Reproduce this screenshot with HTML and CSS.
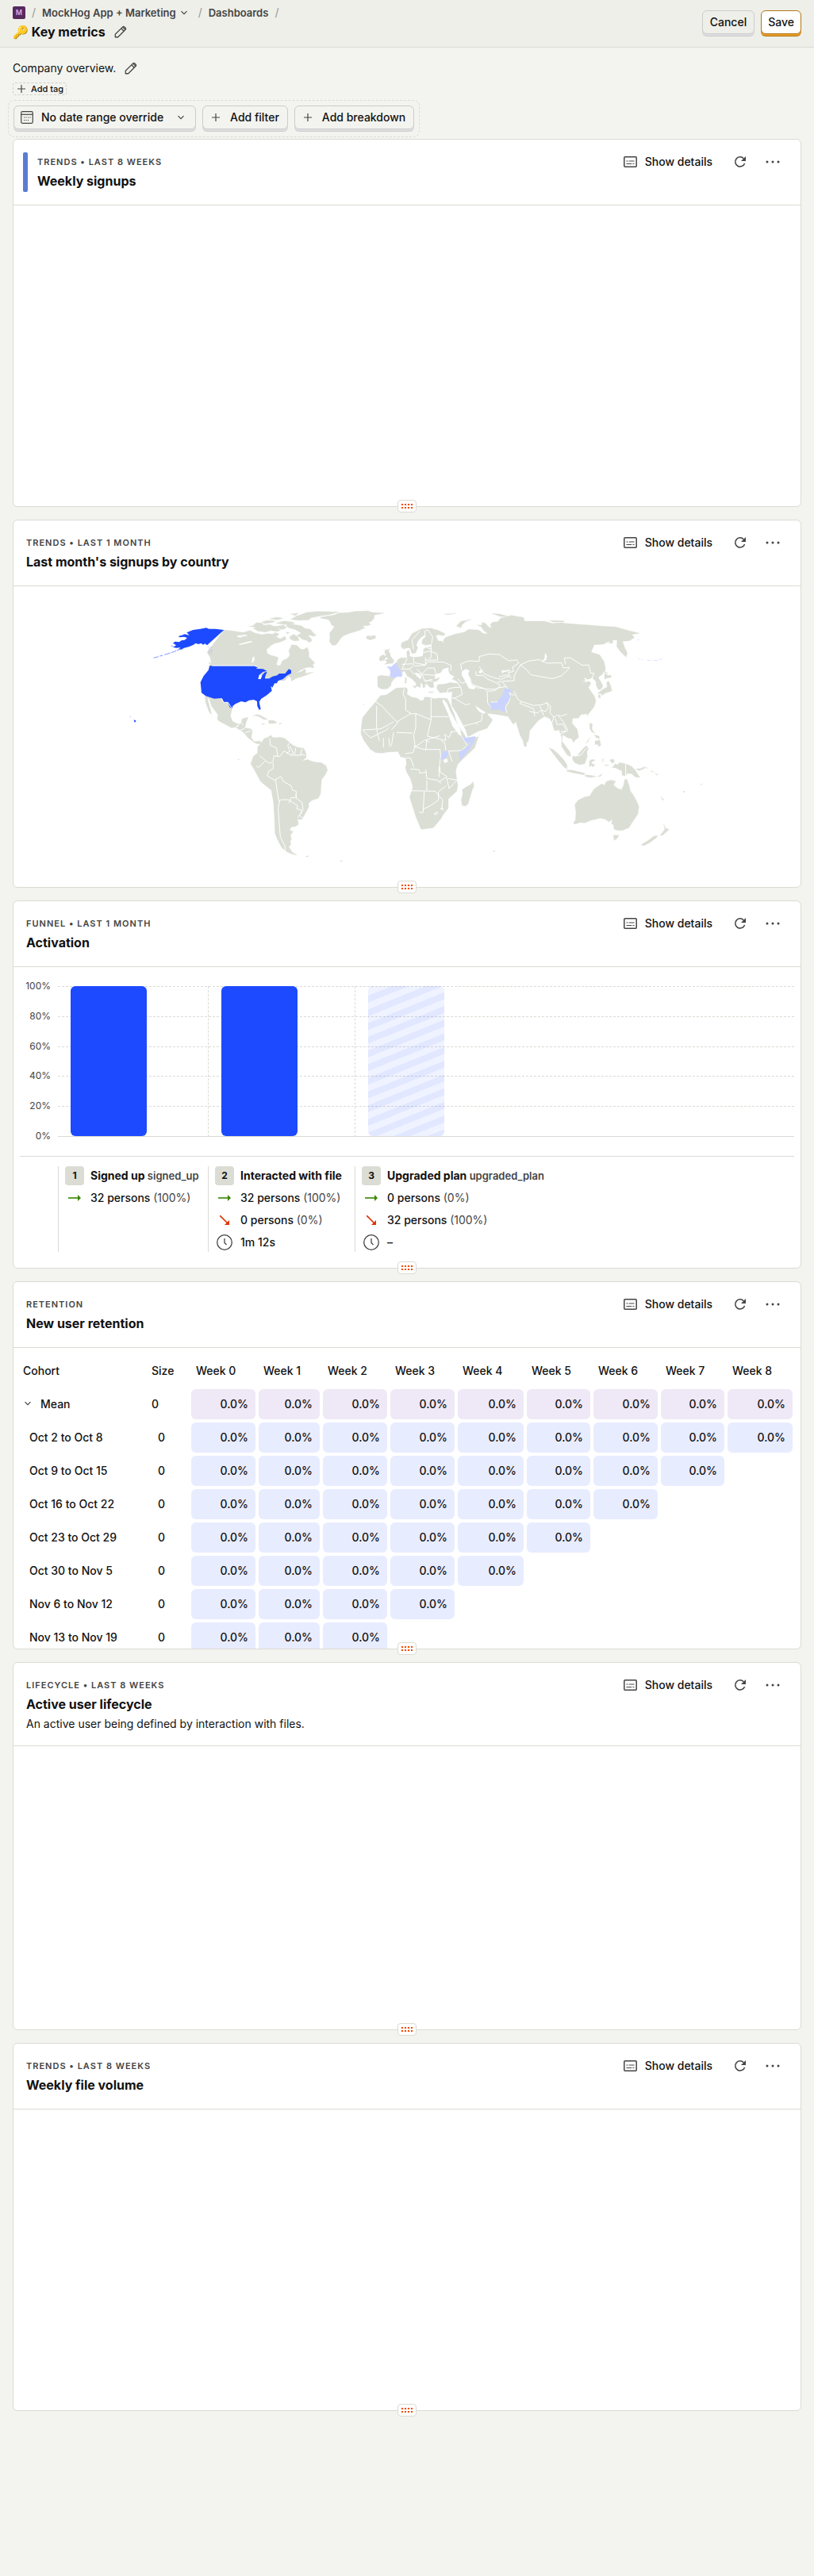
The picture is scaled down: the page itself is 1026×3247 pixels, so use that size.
FILE: index.html
```html
<!DOCTYPE html>
<html lang="en">
<head>
<meta charset="utf-8">
<meta name="viewport" content="width=device-width, initial-scale=1">
<title>Key metrics</title>
<link rel="stylesheet" href="styles.css">
</head>
<body>
<svg class="sprite" aria-hidden="true">
  <symbol id="pencil" viewBox="0 0 24 24"><path d="M3 21v-4.600L15.600 3.800a2 2 0 0 1 2.800 0l1.800 1.800a2 2 0 0 1 0 2.800L7.600 21zM13 6.400l4.600 4.600M15.500 4l4.600 4.600" fill="none" stroke="currentColor" stroke-width="1.700" stroke-linejoin="round"/></symbol>
  <symbol id="chevron" viewBox="0 0 12 12"><path d="M2.500 4.200 6 7.700l3.500-3.500" fill="none" stroke="currentColor" stroke-width="1.200"/></symbol>
  <symbol id="plus" viewBox="0 0 12 12"><path d="M6 1v10M1 6h10" fill="none" stroke="currentColor" stroke-width="1.200"/></symbol>
  <symbol id="calendar" viewBox="0 0 16 16"><rect x=".7" y=".7" width="14.600" height="14.600" rx="1.500" fill="none" stroke="currentColor" stroke-width="1.200"/><path d="M1 4.300h14" stroke="currentColor" stroke-width="1.200"/><path d="M6.500 8h1.200M9 8h1.200M11.500 8h1.200M4 11.500h1.200M6.500 11.500h1.200M9 11.500h1.200M4 8h1.200" stroke="currentColor" stroke-width="1.200"/></symbol>
  <symbol id="details" viewBox="0 0 17 14"><rect x=".8" y=".8" width="15.400" height="12.400" rx="1" fill="none" stroke="currentColor" stroke-width="1.500"/><path d="M3.500 6h2M6.700 6h6.800M3.500 9.500h6.800M11.500 9.500h2" stroke="currentColor" stroke-width="1.200"/></symbol>
  <symbol id="refresh" viewBox="0 0 16 16"><path d="M13.600 10A6.100 6.100 0 1 1 12.300 3.700" fill="none" stroke="currentColor" stroke-width="1.600"/><path d="M15 1v6H9z" fill="currentColor"/></symbol>
  <symbol id="dots" viewBox="0 0 18 4"><g fill="currentColor"><circle cx="2" cy="2" r="1.500"/><circle cx="9" cy="2" r="1.500"/><circle cx="16" cy="2" r="1.500"/></g></symbol>
  <symbol id="grip" viewBox="0 0 16 6"><path d="M0 1h16M0 5h16" stroke="#fbe6dc"/><path d="M1 1h2m2 0h2m2 0h2m2 0h2M1 5h2m2 0h2m2 0h2m2 0h2" stroke="#f54e00" stroke-width="2"/></symbol>
  <symbol id="arrow" viewBox="0 0 16 8"><path d="M0 4h13" stroke="currentColor" stroke-width="1.600"/><path d="M12 0l4 4-4 4z" fill="currentColor"/></symbol>
  <symbol id="drop" viewBox="0 0 12 12"><path d="M0 0l10 10" stroke="currentColor" stroke-width="1.700"/><path d="M12 6v6H6z" fill="currentColor"/></symbol>
  <symbol id="clock" viewBox="0 0 20 20"><circle cx="10" cy="10" r="9.300" fill="none" stroke="currentColor" stroke-width="1.300"/><path d="M10 5v5.500l2.500 2.500" fill="none" stroke="currentColor" stroke-width="1.300"/></symbol>
</svg>

<header class="topbar">
  <div class="topbar-main">
    <nav class="crumbs" aria-label="Breadcrumb">
      <a class="org" href="#">M</a><span class="slash">/</span>
      <a class="project" href="#">MockHog App + Marketing <svg class="ic12"><use href="#chevron"/></svg></a><span class="slash">/</span>
      <a href="#">Dashboards</a><span class="slash">/</span>
    </nav>
    <div class="title-row"><h1>🔑 Key metrics</h1><button class="icon-btn" aria-label="Edit name"><svg class="ic18"><use href="#pencil"/></svg></button></div>
  </div>
  <button class="btn">Cancel</button>
  <button class="btn btn-primary">Save</button>
</header>

<main class="page">
  <div class="desc-row"><span>Company overview.</span><button class="icon-btn" aria-label="Edit description"><svg class="ic18"><use href="#pencil"/></svg></button></div>
  <button class="tag-btn"><svg class="ic12"><use href="#plus"/></svg>Add tag</button>
  <div class="filters">
    <button class="btn btn-date"><svg class="ic16"><use href="#calendar"/></svg><span>No date range override</span><svg class="ic12"><use href="#chevron"/></svg></button>
    <button class="btn btn-add"><svg class="ic12"><use href="#plus"/></svg>Add filter</button>
    <button class="btn btn-add"><svg class="ic12"><use href="#plus"/></svg>Add breakdown</button>
  </div>

  <div class="cards">
  <section class="card">
    <div class="card-head ribboned"><div class="ribbon"></div>
      <div class="card-meta"><div class="kicker">Trends • Last 8 weeks</div><h2>Weekly signups</h2></div>
      <div class="card-tools"><button class="tool"><svg class="ic-details"><use href="#details"/></svg>Show details</button><button class="tool" aria-label="Refresh"><svg class="ic16"><use href="#refresh"/></svg></button><button class="tool" aria-label="More"><svg class="ic-dots"><use href="#dots"/></svg></button></div>
    </div>
    <div class="card-body"></div>
    <div class="grip"><svg><use href="#grip"/></svg></div>
  </section>

  <section class="card">
    <div class="card-head">
      <div class="card-meta"><div class="kicker">Trends • Last 1 month</div><h2>Last month's signups by country</h2></div>
      <div class="card-tools"><button class="tool"><svg class="ic-details"><use href="#details"/></svg>Show details</button><button class="tool" aria-label="Refresh"><svg class="ic16"><use href="#refresh"/></svg></button><button class="tool" aria-label="More"><svg class="ic-dots"><use href="#dots"/></svg></button></div>
    </div>
    <div class="card-body">
      <svg class="map" viewBox="-1449 -33 2976 1137" role="img" aria-label="World map of signups">
        <g transform="translate(-1050 0)">
          <g class="land">
            <path d="M397 132l33 4 40 6 25-8 20 10 25 6 20-4 22 2 8-6 16 6-12 10 16 8 18-10 4 12-22 10-20 4-14 8-12 10-6 6 2 14 14 8 16 4 12 4-2 10-4 14 2 6 12 0 8-18 18-8 10-12-4-18 6-10 4-12 20 2 14 14 12 2 14-8 6 18 0 18 22 22-12 14-25 6-20 10-12 10 20-8 12-8 4 8-4 8 32-4-35 14-32 10-16 10-2-14-9-6-14 18-24 0-6 8-30 8-10-2 20-12-16-12-16-8-28-10H355l-10-13-6-12 10-14-4-20-12-20z"/>
            <path d="M343 254l12 16-8-2-8-14z"/>
            <path d="M640 108l22 4 28 4 12 10 22 4 10 12 12 10-12 4-12-4-8 2 10 8 6 10-10 8-10-8-16-4-10-8-12-6 10-6 8-2-10-8-16-8-22-6-10-8z"/>
            <path d="M520 104l22 2 4 8 26-2 12 6 22 0-6 10 12 4-14 6-24-4-20 6-30-4-16-10 10-4-28-4 16-2z"/>
            <path d="M600 118l20-4 14 8-12 8-16-2zM540 102l20-6 30 2-10 6-30 4zM570 90l26-6 24 4-22 6zM595 106l30-8 30 4 10 6-40 4zM650 92l20-12 40-14 40-4 80 2-34 10-30 4-40 8-8 8-34 2zM650 72l28-4-10 10zM645 158l16-10 16 12 4 12-18 2-16-8zM630 140l14 2-6 6z"/>
            <path d="M762 84l50-8 18-8 40-2 20-4 50-2 20 6 42 2-36 8-2 12-8 10-12 6 8 8-14 4-18 0 10 8-22 10-20 6-20 6-18 8-10 8-14 20-8 8-12 0-10-14 2-18-2-14 12-14 6-12-10-4-6-14-8-8-26-4z"/>
            <path d="M934 160l6-6 12 2 14-4 6 6-4 6-18 6-12-4zM712 262l8-12 4 14 12 4 0 8-20-4z"/>
            <path d="M325 382L360 392L388 391L396 406H412L428 430L421 458L430 478L450 488L462 482L466 468L488 462L480 484L476 502L498 506L504 512L500 540L512 554L535 552L537 564L518 562L488 540L470 518L440 500L425 502L380 478L372 470L374 452L350 420L340 390L334 392L345 430L350 452L340 440L328 408Z"/>
            <path d="M506 458l14-6 12 2 30 16-14 1-14-9-16-6zM566 474l18 0 14 8-14 4-18 0zM540 486l12 2-10 2zM606 484l10 2-10 2z"/>
            <path d="M537 560l12-18 14-4 12-8 4 8 12 2 18-2 18 4 16 14 14 12 18 8 24 4 8 18 1 16-15 14 20-6 14 6 16 4 22 2 18 12 5 16-7 16-15 20-2 24-2 30-8 16-24 8-14 12 2 12-8 16-18 32-18 0 4 12 0 8-8 6-20 4-4 12 12 4-10 16 4 12-4 10 2 12-8 8 12 20 18 12-32-8-24-20-16-30-10-24-2-60-4-60-8-44-20-16-20-16-26-48-12-20 10-28 16-12 1-24z"/>
            <path d="M706 988l12-2-6 5zM448 621l6 0 0 2zM920 416l10-2M836 1004l10 2-6 2z"/>
            <path d="M978 308l12-4 40 4 15 4-15 18-2 12-12 12-18 2-14-4-6-6z"/>
            <path d="M1008 206l10 2 4-6-2 12 6 8 0 8 14 18-4 10-20 2-12 2 10-8-8-8 12-4-4-6-8 0 4-8-6-12zM986 234l12-8 10 4-4 16-16 4-4-6z"/>
          </g>
          <g class="strong">
            <path d="M397 132l-64 58-8-6-7 4-8-6-10 4-10-4-8 6-18 8-18 4-10 6-12 0 8-8-14 2-14-2 12-8-12-8 8-6 16 2 8-6 12-2 10-8-12-4-16 2-6-4 14-4 10-4 18 4-10-10 24-10 28-4 22-4 10 4 24 0z"/>
            <path d="M131 238l18-5M154 231l12-3M172 226l22-7M198 218l18-7M218 210l16-6M197 192l8 2" class="thin-strong"/>
            <path d="M56 472l5 1 4 4-6 5zM40 458l4 2 0 2zM50 463l6 2z"/>
            <path d="M343 268H510L528 272L518 278L545 280L560 288L545 290L530 302L526 318L536 318L542 302L552 292L560 292L554 304L552 316L568 316L580 308L598 304L606 297H628L642 280L651 284V296L636 304L620 318L602 324L596 334L588 334L580 350L574 344L578 362L560 378L538 392L530 404L536 432L530 434L523 420L522 402L510 396L492 398L478 406L462 402L440 412L430 420L428 430L418 424L412 406H396L388 390L360 392L328 382L312 370L308 330L320 306L338 284Z"/>
          </g>
          <path d="M335 196l16 2-12 8 14 4-16 6 14 8M338 198l4 24M350 198l2 26" fill="none" stroke="#7f97ff" stroke-dasharray="4 4"/>
          <g class="water"><path d="M446 154l34-4 6 4-24 4-2 4-12-4zM452 186l30-8 20-4 2 4-24 6-24 5zM502 256l2-18 8-6 0 14-6 10zM608 146l24-6-4 10-18 8z"/></g>
          <g class="borders"><path d="M352 267H512M512 267l18 8M388 391l8 15h16l16 24M448 492l0 8M440 500l14-10 6-8M460 482l10 8M456 512l16-6 12-10M478 520l20-6M570 540l2 28 24 10 4 32 8 0 16-20 12 6 10-4-8-24 8-10M646 572l14 26-10 6-16-6M668 578l-4 28 22 0 6-24M686 602l18 4M648 606l14 0M532 608l22 18-26 26-8-4M554 626l12 10 16-4 4-24 16 2M582 636l2 20-18 10-6 18 28 16 24-14 10 20 28 14 6 18 14 4 0 24-18 0-10 20M592 698l4 30 8 50 10-4 18 0 10 0M642 775l34 22-4 12 18 4 0 12-8 8 26 20M608 776l-6 30 4 60 4 50 18 34 0 20 26 12M668 754l4 16 20 14 4 28-20 30"/></g>
          <path class="weak" d="M1010 272l14-2 4 2 20-18 14 8 14 6-6 12-2 10 4 10-4 10-14-2-12 6-18-6 2-18-4-10-8-6zM1081 314l3 0-1 8z"/>
        </g>
        <g class="land">
          <path d="M40 238l-2-23 7-7 5 12-2 12 12 2 30-2 10-10 2-18 10-6 18-2 2-10-22 4-15-6 3-16 10-10-4-6-14 10-10 12-6 16 6 8-8 20-14 4-8-22-12 0-12 4-6-4-4-10 4-10 23-10 15-24 35-18 35-3 30 9 25 12-5 8-22-4-8 6 10 18 12 0 8 8-2-12 10-10 35-12 35-8 17-10 38 3 15 12 20 2-16-12-14-20 8-4-2-8 14 4 8 10 14 10-4-16 8-8 20-2 12-14 40-10 45 8 5 14 75 0 30 8 30-2 40 4 60 4 50 4 60 4 50 14 40 10-30 4 10 12-20 12-25 2 8 24 10 20-5 16-20-20-15-20 2-25-17 0 0 12-15 0 4-8-24 12-35 2-12 28 32 10 17 26 6 28-13 20-15 12 10 16 8 16-8 12-10 2-8-18 0-12-15-16-8 8-12-2-12-8 8 16 12 0 8 8-10 16 22 32 6 18-6 22-20 26-30 4-10 14-20 0-8 14 24 28 5 30-14 12-6 8-6-14-16-4-18-12-4 24 20 26 12 16 2 18-14-8-20-32 0-34-10-28-10 2-8 0-8-28-9-17-20-8-22 14-34 40-4 36-13 18-20-38-15-50-10 10-8-12-12-18-40-7-35-4-25-14-25-18 10 20 10 8 15 6 8-8 10 16 14 14-21 32-30 10-43 22-7-24-35-66-18-27-2-25 4-28-48 4-12-18 4-13 26-2 22-6 30 4-14-12-30-12 10-16-26 2-10 16-10 12-15 4 3 20-13 2-12-12-6-12-9-15-20-15-12-6 5 15 25 20 8 10-16-4-2 18-18-8 4-6-16-18-20-12-7-15-24-26 10-12z"/>
          <path d="M40 238l-25 0-10 6-6 12 2 8 20 30 10-10 14 2 20-10 5-20z"/>
          <path d="M-2 352l37-2 6 6-2 20 18 10 20 4 14 10 10-2 4-12 16 0 20 6 16-2 34 0 6 12 21 50 13 42 20 26 7 12 5 10 46-6-14 42-40 38-24 24-8 24 4 32 4 24-4 22-32 30 0 34-16 20-12 20-28 34-42 6-6-2-6-16-12-28-24-76 4-12 8-26-8-30-16-28-4-16 4-14-2-22-20-4-10-20-40 2-20 4-24-2-20-12-26-36-10-24 2-32 4-28 22-28 22-26 24-30 22-2z"/>
          <path d="M289 706l3 16-8 20-14 48-10 8-12-2-4-22 6-22-2-16 18-12 12-6z"/>
          <path d="M483 548l8 12 0 12-8 1-4-14zM655 476l10-2-2 10-8 2zM722 436l4 4-4 18-4-10zM730 484l10 4-2 16 4 10 8 8-12-4-8-14zM750 552l18-4 4 20-8 6-4-10-10 2zM746 528l8 2 12 4 0 10-10-4zM716 560l14-20-8 16z"/>
          <path d="M576 578l16 6 22 20 18 20 12 18 0 16-12-8-20-24-20-26zM642 662l20 0 26 6 24 6-4 6-42-8-22-6zM665 610l18-2 24-30 10-8 8 10-6 14 2 16-10 28-20 4-18-8-8-12zM730 626l8-4 14 2-16 8 2 6 12 4-8 8-8-8-2 8-4-2zM712 680l22 2 20 4-20 4-20-4zM760 686l18-10-8 10zM778 622l4-4-2 14zM786 642l18 2-14 2zM806 624l12-4 6 8-4 6-6 2z"/>
          <path d="M824 638l12 4 6-8 24 4 22 10 14 14 8 14 10 14-18-2-14-12-14-2-8 8-6 2-8-4 0-14-24-12-14-2 8-6zM904 658l20-2 14-8-2 8-20 8z"/>
          <path d="M870 696l8 22 6 24 8 10 14 24 10 24-4 28-20 30-14 22-14 6-12 4-16 0-14-4-2-18-8-2 4-18-14 10-12-10-20-4-36 8-22 10-18-2-20 6-6-4 8-10 2-30-4-30 12-16 24-12 20-4 16-26 20-14 10-6 10 6 6-14 18-6 18 4-8 14 16 14 14 4 8-16 4-22z"/>
          <path d="M820 908l20 0-6 12-12 8zM1010 866l6 16 14 4-12 12-14 12-8-2 12-14 6-8zM986 910l-2 6-26 20-24 12-10-4 30-18 18-14zM1082 742l8 0-4 6zM998 762l12 12-4 2zM940 650l8 4-4 2zM960 664l12 6-8-2zM976 674l14 6-8 0zM364 968l8-2-2 5zM1150 714l6 1-5 3z"/>
          <path d="M748 234l18 24 20 30 14 10-12-4-16-20-10-16zM786 296l12 8 14 0-2 8-14 2-10 4zM800 324l8 16 6 22-16 6-18 6-20-2 20-16 16-8-2-16zM762 378l8 0 0 12-6-2zM774 374l12-2-8 8z"/>
          <path d="M226 118l16-18 40-8-20 8-16 14-2 10zM360 70l30 2 30 8-26 2zM578 96l56 2-2 4-40 0zM180 72l44-2-30 4zM796 120l14 2-12 4zM305 112l14 4-4 4zM120 366l22 0-14 4zM160 360l14-2-10 6zM60 344l16 0-6 8zM34 312l3 0-1 22-5-2zM95 300l10 22 8 16-14 4-8-20zM312 528l4 0-2 2zM98 336l12 10-10 6z"/>
        </g>
        <g class="water">
          <path d="M246 290l14-10 16 6-6 12 10 20 4 22 16 6-6 10-20-2-10-18-8-16-10-16zM396 284l12 2 20-3 0 4-22 4-6 6zM561 218l8 14-4 14-18 8 12-14zM314 284l12-2-6 14-10-2zM176 624l14-6 4 12-12 6zM146 300l20-6 10-14 20-6 0 14 6 12 16 8-10 12-24-2-24-6-16 6zM58 233l0-6 16 2 12-8 14-2-2 12-28 4zM176 394l-3 8 20 44 18 50 24 32 10 6-4-24-38-70-14-32z"/>
        </g>
        <g class="borders">
          <path d="M130 186l0 50-10 4M112 198l22 8M100 218l26-6M110 246l46 0-4-24-26-10M64 234l0 22 46 8-2-28M20 262l40-2 10 8 38-2 10-14 60 2 28 12-2 22M40 240l-20 40 28 0 16-12M48 280l16 18 32 0 22-22 24 0 8 28-52-4M76 280l20 20-8 14M96 300l10 26 30-8M110 322l26 4M64 206l-6-36 30-34M108 160l-2-24 12-4 18 26-4 26M188 394l0-20 8-20 20-4 26-2 6 28-30 14 44 26 16-6M196 390l24 0M242 350l-12-20-16-10M232 318l14 16 16-6M246 285l-4-24 30-12 40 2 0-18 36-10 40 2 36 24 30-4 8 12-24 16 4 16-20 4 6 12-34 14-32-8-30-12-20-28M300 288l0 16 26 0 18 14 32 14 16 10-12 14-42 0-46-16-26-14M300 350l32 4 10 10 2 44 22 26M344 364l26-2 12-10 32-6M356 406l30-2 20-28 12-22M402 326l42-2 0-18 24-42M386 310l30-8 18 12M380 330l18-4 20 26 16 12-10 6 22 10M468 264l20 16 20 22 80 14 34-10 24-22 8-10-24 2-6-20-56 2-30-14-40 6zM638 262l-4-24 24 0 44 28 24-2 8 32 12 0-8 20-32 12M715 330l20-14M444 364l14 30 12 8 48 16 36-4 14-8 6 20-10 14-18-4-14 10-30-6M470 402l-4 8 52 20 4 28M542 420l14 36M568 406l14 14-2 26 14 16-10 30 8 36M594 462l14-8 12 4 24-8M600 466l6 24 22-2 12 20-6 12-18 6M612 458l22 26 14 30M620 516l26 0M430 376l-4 24-14 26 4 20M244 498l54-14 22-8 4-28M300 482l6 10M616 574l8 6M672 610l24-4 22-28M866 636l0 46"/>
          <path d="M130 390l0 82-58-24-14 2-24-14 0-44-10-16 4-22M130 460l66 0M130 472l-14 62 70 16-4-24 16 14 10-26M72 450l0 50-8 30 6 44 38-26 16 8M0 520l60 2M0 480l54-32M-20 510l24-26-60-64-40-28 30-12M-76 420l0 86M-110 430l-24 0 0 30-18 4M-126 510l66-4 48-26M-130 510l32 30 40-20 20-10 8-10M-76 506l10 46M-50 540l0 36M-30 540l4 34M-12 520l-8 50M64 572l46 14 4-34M32 600l30-4 8-26M108 584l56 0 2 30-6 44 0 30M110 660l4 34 40 6 14 12M114 700l0 40M50 740l96 2M104 744l-4 78-16 0M100 810l28-14 30-20 0-32 28-22M146 742l28 34-4 34M158 708l30-20 10 44 30-32 4 0M164 650l0 20 26 16M210 630l-14-40M186 588l-4-28-14-10M196 590l50-2 20-20-20-34M204 520l24-6 16 16M110 548l54-16M150 830l6-8-8 0-6 6zM166 808l6-4 4 8zM52 658l32 2 4 14 22-4M36 616l16 0 14 36M194 694l34 6"/>
        </g>
        <g class="weak">
          <path d="M408 354l18 0 12 12-16 4 8 14-8 18-14 14 4 26-14-2-8-8-30 4-4-14-8-14 32-2 6-12 14-14zM170 592l22-2 4 14-10 12-20 8 2-16 6-8zM247 534l12 6 38-6-4 20-22 36-34 36-1-34 10-4 34-26-20-6zM908 169l10 0-4 2z"/>
          <path d="M912 242l6 0M926 244l6 0M946 246l14 2M970 247l18 0M992 244l12-2" class="thin-weak"/>
        </g>
      </svg>
    </div>
    <div class="grip"><svg><use href="#grip"/></svg></div>
  </section>

  <section class="card">
    <div class="card-head">
      <div class="card-meta"><div class="kicker">Funnel • Last 1 month</div><h2>Activation</h2></div>
      <div class="card-tools"><button class="tool"><svg class="ic-details"><use href="#details"/></svg>Show details</button><button class="tool" aria-label="Refresh"><svg class="ic16"><use href="#refresh"/></svg></button><button class="tool" aria-label="More"><svg class="ic-dots"><use href="#dots"/></svg></button></div>
    </div>
    <div class="card-body funnel">
      <div class="plot">
        <div class="gridlines"><i></i><i></i><i></i><i></i><i></i><i></i></div>
        <div class="axis"><span>100%</span><span>80%</span><span>60%</span><span>40%</span><span>20%</span><span>0%</span></div>
        <div class="step"><div class="bar"></div></div>
        <div class="step"><div class="bar"></div></div>
        <div class="step"><div class="bar bar-empty"></div></div>
      </div>
      <div class="legend">
        <div></div>
        <div class="leg">
          <div class="row head"><b class="num">1</b><span>Signed up <small>signed_up</small></span></div>
          <div class="row"><svg class="up"><use href="#arrow"/></svg><span>32 persons <em>(100%)</em></span></div>
        </div>
        <div class="leg">
          <div class="row head"><b class="num">2</b><span>Interacted with file</span></div>
          <div class="row"><svg class="up"><use href="#arrow"/></svg><span>32 persons <em>(100%)</em></span></div>
          <div class="row"><svg class="down"><use href="#drop"/></svg><span>0 persons <em>(0%)</em></span></div>
          <div class="row"><svg class="time"><use href="#clock"/></svg><span>1m 12s</span></div>
        </div>
        <div class="leg">
          <div class="row head"><b class="num">3</b><span>Upgraded plan <small>upgraded_plan</small></span></div>
          <div class="row"><svg class="up"><use href="#arrow"/></svg><span>0 persons <em>(0%)</em></span></div>
          <div class="row"><svg class="down"><use href="#drop"/></svg><span>32 persons <em>(100%)</em></span></div>
          <div class="row"><svg class="time"><use href="#clock"/></svg><span>–</span></div>
        </div>
      </div>
    </div>
    <div class="grip"><svg><use href="#grip"/></svg></div>
  </section>

  <section class="card">
    <div class="card-head">
      <div class="card-meta"><div class="kicker">Retention</div><h2>New user retention</h2></div>
      <div class="card-tools"><button class="tool"><svg class="ic-details"><use href="#details"/></svg>Show details</button><button class="tool" aria-label="Refresh"><svg class="ic16"><use href="#refresh"/></svg></button><button class="tool" aria-label="More"><svg class="ic-dots"><use href="#dots"/></svg></button></div>
    </div>
    <div class="card-body retention">
      <table>
        <colgroup><col class="c-cohort"><col class="c-size"><col class="c-85"><col class="c-81"><col class="c-85"><col class="c-85"><col class="c-87"><col class="c-84"><col class="c-85"><col class="c-84"><col class="c-86"></colgroup>
        <thead><tr><th>Cohort</th><th>Size</th><th>Week 0</th><th>Week 1</th><th>Week 2</th><th>Week 3</th><th>Week 4</th><th>Week 5</th><th>Week 6</th><th>Week 7</th><th>Week 8</th></tr></thead>
        <tbody>
          <tr class="mean"><td><svg class="ic12"><use href="#chevron"/></svg>Mean</td><td>0</td><td><div>0.0%</div></td><td><div>0.0%</div></td><td><div>0.0%</div></td><td><div>0.0%</div></td><td><div>0.0%</div></td><td><div>0.0%</div></td><td><div>0.0%</div></td><td><div>0.0%</div></td><td><div>0.0%</div></td></tr>
          <tr><td>Oct 2 to Oct 8</td><td>0</td><td><div>0.0%</div></td><td><div>0.0%</div></td><td><div>0.0%</div></td><td><div>0.0%</div></td><td><div>0.0%</div></td><td><div>0.0%</div></td><td><div>0.0%</div></td><td><div>0.0%</div></td><td><div>0.0%</div></td></tr>
          <tr><td>Oct 9 to Oct 15</td><td>0</td><td><div>0.0%</div></td><td><div>0.0%</div></td><td><div>0.0%</div></td><td><div>0.0%</div></td><td><div>0.0%</div></td><td><div>0.0%</div></td><td><div>0.0%</div></td><td><div>0.0%</div></td><td></td></tr>
          <tr><td>Oct 16 to Oct 22</td><td>0</td><td><div>0.0%</div></td><td><div>0.0%</div></td><td><div>0.0%</div></td><td><div>0.0%</div></td><td><div>0.0%</div></td><td><div>0.0%</div></td><td><div>0.0%</div></td><td></td><td></td></tr>
          <tr><td>Oct 23 to Oct 29</td><td>0</td><td><div>0.0%</div></td><td><div>0.0%</div></td><td><div>0.0%</div></td><td><div>0.0%</div></td><td><div>0.0%</div></td><td><div>0.0%</div></td><td></td><td></td><td></td></tr>
          <tr><td>Oct 30 to Nov 5</td><td>0</td><td><div>0.0%</div></td><td><div>0.0%</div></td><td><div>0.0%</div></td><td><div>0.0%</div></td><td><div>0.0%</div></td><td></td><td></td><td></td><td></td></tr>
          <tr><td>Nov 6 to Nov 12</td><td>0</td><td><div>0.0%</div></td><td><div>0.0%</div></td><td><div>0.0%</div></td><td><div>0.0%</div></td><td></td><td></td><td></td><td></td><td></td></tr>
          <tr><td>Nov 13 to Nov 19</td><td>0</td><td><div>0.0%</div></td><td><div>0.0%</div></td><td><div>0.0%</div></td><td></td><td></td><td></td><td></td><td></td><td></td></tr>
        </tbody>
      </table>
    </div>
    <div class="grip"><svg><use href="#grip"/></svg></div>
  </section>

  <section class="card">
    <div class="card-head">
      <div class="card-meta"><div class="kicker">Lifecycle • Last 8 weeks</div><h2>Active user lifecycle</h2><p>An active user being defined by interaction with files.</p></div>
      <div class="card-tools"><button class="tool"><svg class="ic-details"><use href="#details"/></svg>Show details</button><button class="tool" aria-label="Refresh"><svg class="ic16"><use href="#refresh"/></svg></button><button class="tool" aria-label="More"><svg class="ic-dots"><use href="#dots"/></svg></button></div>
    </div>
    <div class="card-body"></div>
    <div class="grip"><svg><use href="#grip"/></svg></div>
  </section>

  <section class="card">
    <div class="card-head">
      <div class="card-meta"><div class="kicker">Trends • Last 8 weeks</div><h2>Weekly file volume</h2></div>
      <div class="card-tools"><button class="tool"><svg class="ic-details"><use href="#details"/></svg>Show details</button><button class="tool" aria-label="Refresh"><svg class="ic16"><use href="#refresh"/></svg></button><button class="tool" aria-label="More"><svg class="ic-dots"><use href="#dots"/></svg></button></div>
    </div>
    <div class="card-body"></div>
    <div class="grip"><svg><use href="#grip"/></svg></div>
  </section>
  </div>
</main>
</body>
</html>
```
FILE: styles.css
```css
* { box-sizing: border-box; }
body {
  margin: 0;
  min-height: 100vh;
  background: #f3f4ef;
  color: #111;
  font: 14px/20px Inter, "Liberation Sans", sans-serif;
}
h1, h2, p { margin: 0; }
button { font: inherit; color: inherit; background: none; border: 0; padding: 0; margin: 0; cursor: pointer; }
a { color: inherit; text-decoration: none; }
svg { display: block; flex: none; color: #444; }
.sprite { position: absolute; width: 0; height: 0; }
.ic12 { width: 12px; height: 12px; }
.ic16 { width: 16px; height: 16px; }
.ic18 { width: 18px; height: 18px; }
.ic-details { width: 17px; height: 14px; }
.ic-dots { width: 18px; height: 4px; }

/* Top bar */
.topbar {
  display: flex;
  align-items: flex-start;
  gap: 8px;
  height: 60px;
  padding: 0 16px;
  background: #eeefe9;
  border-bottom: 1px solid #dadbd5;
}
.topbar-main { flex: 1; padding-top: 8px; }
.topbar .btn { margin-top: 13px; }
.crumbs { display: flex; align-items: center; gap: 8px; height: 16px; font-size: 13px; font-weight: 600; color: #444; }
.crumbs a { display: flex; align-items: center; gap: 4px; }
.crumbs .project { margin-right: 4px; }
.crumbs .org {
  justify-content: center;
  width: 16px;
  height: 16px;
  border-radius: 2px;
  background: #572a5e;
  color: #e0a5e5;
  font-size: 9px;
}
.slash { font-size: 14px; font-weight: 400; color: #999; }
.title-row { display: flex; align-items: center; gap: 10px; height: 32px; }
h1 { font-size: 16px; line-height: 24px; font-weight: 700; }
.icon-btn { display: flex; }

/* Raised buttons */
.btn {
  display: flex;
  align-items: center;
  height: 30px;
  padding: 0 8px;
  border: 1px solid #ccc;
  border-radius: 6px;
  box-shadow: 0 2px 0 #e0dde0, 0 3px 0 #ccc;
  font-weight: 500;
}
.topbar .btn { padding: 0 9px; }
.topbar .btn-primary { padding: 0 8px; background: #fff; border-color: #b17816; box-shadow: 0 2px 0 #eb9d2a, 0 3px 0 #b17816; }
.btn-date { padding: 0 12px 0 8px; gap: 10px; }
.btn-date .ic12 { margin-left: 6px; }
.btn-add { padding: 0 10px; gap: 12px; }

/* Page */
.page { padding: 16px 16px 0; }
.desc-row { display: flex; align-items: center; gap: 10px; height: 20px; }
.tag-btn {
  display: flex;
  align-items: center;
  gap: 6px;
  height: 16px;
  margin-top: 8px;
  padding: 0 3px 0 4px;
  border: 1px dashed #d0d1c9;
  border-radius: 3px;
  font-size: 11px;
  font-weight: 500;
}
.filters {
  display: flex;
  gap: 8px;
  width: max-content;
  height: 47px;
  margin: 6px 0 2px -6px;
  padding: 6px;
  border: 1px dashed #dadbd5;
  border-radius: 8px;
}

/* Cards */
.cards { display: flex; flex-direction: column; gap: 16px; }
.card {
  position: relative;
  display: flex;
  flex-direction: column;
  height: 464px;
  background: #fff;
  border: 1px solid #dadbd2;
  border-radius: 6px;
}
.card-head { display: flex; padding: 16px; border-bottom: 1px solid #dadbd2; }
.ribboned { gap: 12px; padding-left: 12px; }
.ribbon { width: 6px; border-radius: 2px; background: #5a7cd2; }
.card-meta { flex: 1; }
.kicker { font-size: 11px; line-height: 24px; font-weight: 600; letter-spacing: 1px; text-transform: uppercase; color: #444; }
h2 { font-size: 16px; line-height: 24px; font-weight: 700; margin-bottom: 2px; }
.card-meta p { line-height: 22px; }
.card-tools { display: flex; gap: 24px; height: 24px; padding-right: 10px; }
.tool { display: flex; align-items: center; gap: 10px; font-weight: 500; }
.tool:first-child { padding-right: 3px; }
.card-body { flex: 1; min-height: 0; overflow: hidden; }
.grip {
  position: absolute;
  left: 50%;
  bottom: -8px;
  display: flex;
  align-items: center;
  justify-content: center;
  width: 24px;
  height: 16px;
  margin-left: -12px;
  background: #fff;
  border: 1px solid #dadbd2;
  border-radius: 4px;
}
.grip svg { width: 16px; height: 6px; }

/* Map */
.map { width: 100%; height: 100%; }
.land { fill: #dbded5; stroke: #dbded5; }
.strong { fill: #1d4aff; }
.weak { fill: #cbd4ff; }
.water { fill: #fff; }
.borders { fill: none; stroke: #fff; stroke-width: 3; stroke-linejoin: round; }
.thin-strong { fill: none; stroke: #7f97ff; stroke-width: 3; }
.thin-weak { fill: none; stroke: #cbd4ff; stroke-width: 2; }

/* Funnel */
.funnel { padding: 24px 8px 0; }
.plot, .legend { display: grid; grid-template-columns: 48px 189px 185px 1fr; }
.plot { position: relative; height: 190px; }
.gridlines { position: absolute; inset: 0 0 0 48px; display: flex; flex-direction: column; justify-content: space-between; }
.gridlines i { border-top: 1px dashed #dadbd5; }
.gridlines i:last-child { border-top-style: solid; }
.axis { display: flex; flex-direction: column; justify-content: space-between; padding-right: 9px; text-align: right; font-size: 12px; color: #444; }
.axis span { height: 1px; line-height: 0; }
.step { position: relative; padding: 0 0 1px 16px; border-left: 1px dashed #dadbd5; }
.axis + .step { padding-left: 15px; border-left-color: transparent; }
.bar { width: 96px; height: 100%; border-radius: 6px; background: #1d4aff; }
.bar-empty { background: repeating-linear-gradient(-22deg, rgba(29, 74, 255, .13) 0 8px, rgba(29, 74, 255, .07) 8px 16px); }
.legend { margin-top: 24px; padding-top: 12px; border-top: 1px solid #dadbd5; }
.leg { display: flex; flex-direction: column; gap: 4px; height: 108px; padding-left: 8px; border-left: 1px solid #dadbd5; white-space: nowrap; }
.row { display: grid; grid-template-columns: 24px 1fr; gap: 8px; align-items: center; height: 24px; font-weight: 500; }
.row svg { justify-self: center; }
.head { font-weight: 700; }
.num { height: 24px; border-radius: 4px; background: #dbddd5; font-size: 12px; line-height: 24px; text-align: center; font-weight: 700; }
.row small { font-size: 13px; font-weight: 600; color: #444; }
.row em { font-style: normal; font-weight: 400; color: #444; }
.up { width: 16px; height: 8px; color: #388600; }
.down { width: 12px; height: 12px; color: #db3707; }
.time { width: 20px; height: 20px; }

/* Retention */
.retention { padding: 8px 8px 0; border-radius: 0 0 5px 5px; }
table { width: 100%; table-layout: fixed; border-collapse: collapse; font-weight: 500; }
.c-cohort { width: 162px; }
.c-size { width: 52px; }
.c-81 { width: 81px; }
.c-84 { width: 84px; }
.c-85 { width: 85px; }
.c-86 { width: 86px; }
.c-87 { width: 87px; }
th { height: 42px; padding: 0 0 0 8px; text-align: left; font-weight: 500; white-space: nowrap; }
th:nth-child(-n+2) { padding-left: 4px; }
td { height: 42px; padding: 2px; white-space: nowrap; }
td:first-child, td:nth-child(2) { padding-left: 12px; }
.mean td:first-child, .mean td:nth-child(2) { padding-left: 4px; }
.mean .ic12 { display: inline-block; margin-right: 10px; }
td div { height: 38px; padding-right: 9px; border-radius: 6px; background: #e8ecff; line-height: 38px; text-align: right; }
.mean td div { background: #efe8f6; }
```
